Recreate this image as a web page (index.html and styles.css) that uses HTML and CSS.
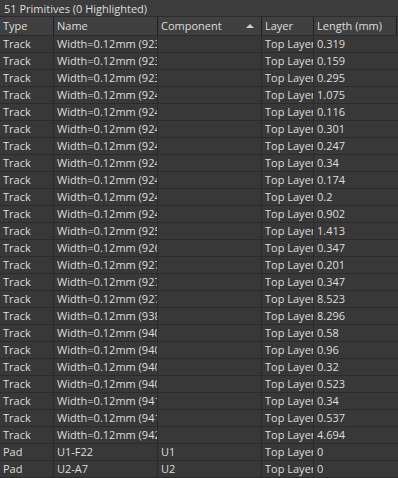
FILE: index.html
```html
<!DOCTYPE html>
<html>
<head>
<meta charset="utf-8">
<link rel="stylesheet" href="styles.css">
</head>
<body>
<div class="panel">
  <div class="title">51 Primitives (0 Highlighted)</div>
  <div class="grid">
    <div class="row head">
      <div class="cell">Type</div>
      <div class="cell">Name</div>
      <div class="cell comp">Component<span class="sort"></span></div>
      <div class="cell">Layer</div>
      <div class="cell last">Length (mm)</div>
    </div>
    <div class="row"><div class="cell">Track</div><div class="cell">Width=0.12mm (9234.5mil,2201mil)</div><div class="cell"></div><div class="cell">Top Layer</div><div class="cell">0.319</div></div>
    <div class="row"><div class="cell">Track</div><div class="cell">Width=0.12mm (9236.1mil,2203mil)</div><div class="cell"></div><div class="cell">Top Layer</div><div class="cell">0.159</div></div>
    <div class="row"><div class="cell">Track</div><div class="cell">Width=0.12mm (9237.2mil,2206mil)</div><div class="cell"></div><div class="cell">Top Layer</div><div class="cell">0.295</div></div>
    <div class="row"><div class="cell">Track</div><div class="cell">Width=0.12mm (9241.0mil,2210mil)</div><div class="cell"></div><div class="cell">Top Layer</div><div class="cell">1.075</div></div>
    <div class="row"><div class="cell">Track</div><div class="cell">Width=0.12mm (9243.4mil,2214mil)</div><div class="cell"></div><div class="cell">Top Layer</div><div class="cell">0.116</div></div>
    <div class="row"><div class="cell">Track</div><div class="cell">Width=0.12mm (9244.8mil,2218mil)</div><div class="cell"></div><div class="cell">Top Layer</div><div class="cell">0.301</div></div>
    <div class="row"><div class="cell">Track</div><div class="cell">Width=0.12mm (9245.6mil,2221mil)</div><div class="cell"></div><div class="cell">Top Layer</div><div class="cell">0.247</div></div>
    <div class="row"><div class="cell">Track</div><div class="cell">Width=0.12mm (9246.3mil,2225mil)</div><div class="cell"></div><div class="cell">Top Layer</div><div class="cell">0.34</div></div>
    <div class="row"><div class="cell">Track</div><div class="cell">Width=0.12mm (9247.7mil,2229mil)</div><div class="cell"></div><div class="cell">Top Layer</div><div class="cell">0.174</div></div>
    <div class="row"><div class="cell">Track</div><div class="cell">Width=0.12mm (9248.2mil,2232mil)</div><div class="cell"></div><div class="cell">Top Layer</div><div class="cell">0.2</div></div>
    <div class="row"><div class="cell">Track</div><div class="cell">Width=0.12mm (9249.9mil,2236mil)</div><div class="cell"></div><div class="cell">Top Layer</div><div class="cell">0.902</div></div>
    <div class="row"><div class="cell">Track</div><div class="cell">Width=0.12mm (9253.1mil,2240mil)</div><div class="cell"></div><div class="cell">Top Layer</div><div class="cell">1.413</div></div>
    <div class="row"><div class="cell">Track</div><div class="cell">Width=0.12mm (9264.5mil,2244mil)</div><div class="cell"></div><div class="cell">Top Layer</div><div class="cell">0.347</div></div>
    <div class="row"><div class="cell">Track</div><div class="cell">Width=0.12mm (9271.8mil,2247mil)</div><div class="cell"></div><div class="cell">Top Layer</div><div class="cell">0.201</div></div>
    <div class="row"><div class="cell">Track</div><div class="cell">Width=0.12mm (9273.0mil,2251mil)</div><div class="cell"></div><div class="cell">Top Layer</div><div class="cell">0.347</div></div>
    <div class="row"><div class="cell">Track</div><div class="cell">Width=0.12mm (9274.6mil,2255mil)</div><div class="cell"></div><div class="cell">Top Layer</div><div class="cell">8.523</div></div>
    <div class="row"><div class="cell">Track</div><div class="cell">Width=0.12mm (9380.2mil,2259mil)</div><div class="cell"></div><div class="cell">Top Layer</div><div class="cell">8.296</div></div>
    <div class="row"><div class="cell">Track</div><div class="cell">Width=0.12mm (9401.5mil,2262mil)</div><div class="cell"></div><div class="cell">Top Layer</div><div class="cell">0.58</div></div>
    <div class="row"><div class="cell">Track</div><div class="cell">Width=0.12mm (9403.3mil,2266mil)</div><div class="cell"></div><div class="cell">Top Layer</div><div class="cell">0.96</div></div>
    <div class="row"><div class="cell">Track</div><div class="cell">Width=0.12mm (9405.7mil,2270mil)</div><div class="cell"></div><div class="cell">Top Layer</div><div class="cell">0.32</div></div>
    <div class="row"><div class="cell">Track</div><div class="cell">Width=0.12mm (9407.1mil,2273mil)</div><div class="cell"></div><div class="cell">Top Layer</div><div class="cell">0.523</div></div>
    <div class="row"><div class="cell">Track</div><div class="cell">Width=0.12mm (9411.4mil,2277mil)</div><div class="cell"></div><div class="cell">Top Layer</div><div class="cell">0.34</div></div>
    <div class="row"><div class="cell">Track</div><div class="cell">Width=0.12mm (9416.0mil,2281mil)</div><div class="cell"></div><div class="cell">Top Layer</div><div class="cell">0.537</div></div>
    <div class="row"><div class="cell">Track</div><div class="cell">Width=0.12mm (9422.9mil,2285mil)</div><div class="cell"></div><div class="cell">Top Layer</div><div class="cell">4.694</div></div>
    <div class="row"><div class="cell">Pad</div><div class="cell">U1-F22</div><div class="cell">U1</div><div class="cell">Top Layer</div><div class="cell">0</div></div>
    <div class="row"><div class="cell">Pad</div><div class="cell">U2-A7</div><div class="cell">U2</div><div class="cell">Top Layer</div><div class="cell">0</div></div>
  </div>
</div>
</body>
</html>
```

FILE: styles.css
```css
html, body {
  margin: 0;
  padding: 0;
  background: #383838;
}
.panel {
  width: 398px;
  height: 478px;
  overflow: hidden;
  font-family: "Open Sans", "Noto Sans", sans-serif;
  font-size: 11px;
  color: #dedede;
  background: #383838;
}
.title {
  height: 17px;
  line-height: 17px;
  padding-left: 4px;
  background: #3c3c3c;
  border-bottom: 1px solid #2c2c2c;
  box-sizing: border-box;
  white-space: nowrap;
}
.row {
  display: grid;
  grid-template-columns: 54px 104px 104px 52px 1fr;
  height: 17px;
  border-bottom: 1px solid #2b2b2b;
  box-sizing: border-box;
}
.row.head {
  height: 19px;
  background: #404040;
  border-bottom: 1px solid #2a2a2a;
}
.cell {
  padding-left: 3px;
  line-height: 16px;
  white-space: nowrap;
  overflow: hidden;
  border-right: 1px solid #2b2b2b;
  box-sizing: border-box;
}
.row:not(.head) .cell:last-child {
  border-right: none;
}
.head .cell {
  line-height: 18px;
  border-right: 1px solid #1f1f1f;
}
.head .cell.last {
  width: 83px;
}
.comp {
  position: relative;
}
.sort {
  position: absolute;
  right: 7px;
  top: 7px;
  width: 0;
  height: 0;
  border-left: 4px solid transparent;
  border-right: 4px solid transparent;
  border-bottom: 4px solid #cfcfcf;
}
```
